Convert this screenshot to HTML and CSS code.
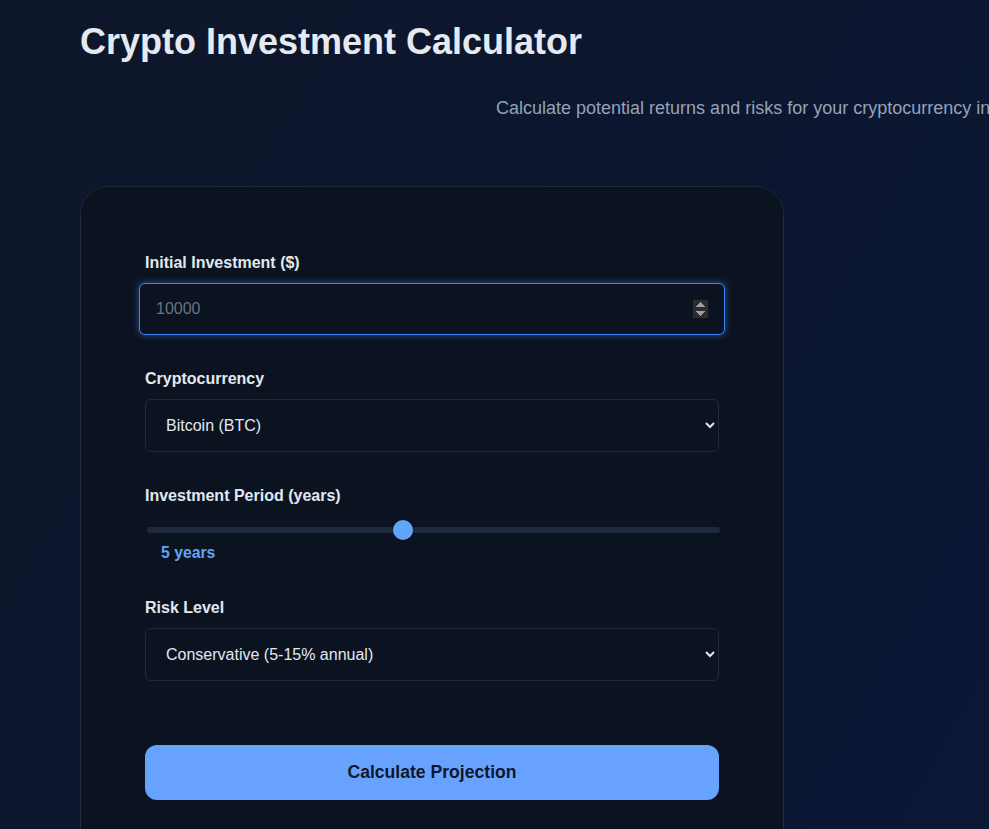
FILE: index.html
```
<!DOCTYPE html>
<html lang="en">
<head>
<meta charset="utf-8">
<title>Crypto Investment Calculator</title>
<link rel="stylesheet" href="styles.css">
</head>
<body>
<main class="page">
  <header class="header">
    <h1 class="title">Crypto Investment Calculator</h1>
    <p class="subtitle">Calculate potential returns and risks for your cryptocurrency investments over time</p>
  </header>
  <section class="card">
    <div class="field">
      <label class="label" for="amount">Initial Investment ($)</label>
      <input class="input input-focused" id="amount" type="number" placeholder="10000" autofocus>
    </div>
    <div class="field">
      <label class="label" for="coin">Cryptocurrency</label>
      <select class="input select" id="coin">
        <option>Bitcoin (BTC)</option>
        <option>Ethereum (ETH)</option>
      </select>
    </div>
    <div class="field field-range">
      <label class="label" for="period">Investment Period (years)</label>
      <input class="range" id="period" type="range" min="1" max="10" value="5">
      <div class="range-value">5 years</div>
    </div>
    <div class="field field-last">
      <label class="label" for="risk">Risk Level</label>
      <select class="input select" id="risk">
        <option>Conservative (5-15% annual)</option>
        <option>Moderate</option>
      </select>
    </div>
    <button class="button" type="button">Calculate Projection</button>
  </section>
</main>
</body>
</html>
```
FILE: styles.css
```
* { box-sizing: border-box; }
html, body {
  margin: 0;
  height: 100%;
}
body {
  color-scheme: dark;
  font-family: "Liberation Sans", Arial, sans-serif;
  background: linear-gradient(120deg, #0e1729 0%, #0c1630 60%, #0b1736 100%);
  color: #e2e8f0;
  overflow: hidden;
}
.page {
  padding: 21px 0 0 80px;
}
.title {
  margin: 0;
  font-size: 36px;
  line-height: 42px;
  font-weight: 700;
  color: #e5e9f0;
}
.subtitle {
  margin: 34px 0 0 416px;
  font-size: 18px;
  line-height: 22px;
  color: #94a3b8;
  white-space: nowrap;
}
.card {
  margin-top: 67px;
  width: 704px;
  background: #0c1320;
  border: 1px solid #1f2937;
  border-radius: 28px;
  padding: 66px 64px 60px 64px;
}
.field {
  margin-bottom: 34px;
}
.field-range { margin-bottom: 37px; }
.field-last { margin-bottom: 64px; }
.label {
  display: block;
  font-size: 16px;
  line-height: 19px;
  font-weight: 700;
  color: #e2e8f0;
  margin-bottom: 11px;
}
.input {
  display: block;
  width: 100%;
  height: 53px;
  background: #0c1320;
  border: 1px solid #1f2937;
  border-radius: 6px;
  color: #e2e8f0;
  font-family: "Liberation Sans", Arial, sans-serif;
  font-size: 16px;
  padding: 0 20px;
  outline: none;
}
.input-focused {
  width: calc(100% + 12px);
  margin: 0 -6px;
  height: 52px;
  border: 1px solid #3b82f6;
  box-shadow: 0 0 6px 1px rgba(59, 130, 246, 0.45);
  padding: 0 16px;
  caret-color: #cbd5e1;
}
.input::placeholder { color: #6b7280; }
.select {
  padding-left: 16px;
}
.range {
  display: block;
  width: calc(100% - 1px);
  margin: 15px 0 4px 2px;
  height: 20px;
  -webkit-appearance: none;
  appearance: none;
  background: transparent;
}
.range::-webkit-slider-runnable-track {
  height: 6px;
  border-radius: 3px;
  background: #1e293b;
}
.range::-webkit-slider-thumb {
  -webkit-appearance: none;
  width: 20px;
  height: 20px;
  border-radius: 50%;
  background: #60a5fa;
  margin-top: -7px;
  border: none;
}
.range-value {
  padding-left: 16px;
  font-size: 15.75px;
  line-height: 17px;
  font-weight: 700;
  color: #60a5fa;
}
.button {
  display: block;
  width: 100%;
  height: 55px;
  border: none;
  border-radius: 12px;
  background: #68a2ff;
  color: #0f172a;
  font-family: "Liberation Sans", Arial, sans-serif;
  font-size: 17.6px;
  font-weight: 700;
}
```
